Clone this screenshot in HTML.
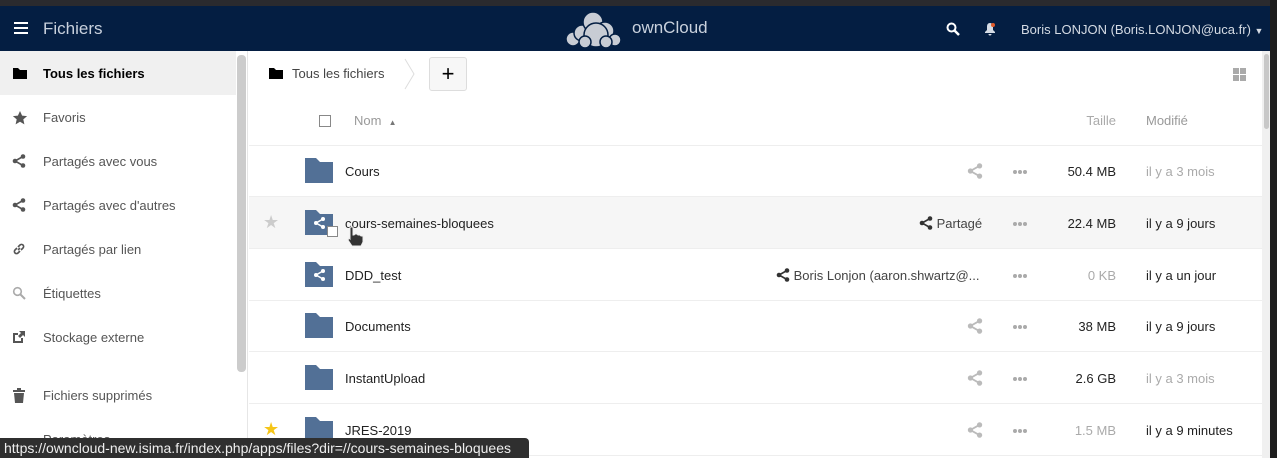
<!DOCTYPE html><html><head><meta charset="utf-8"><style>
*{margin:0;padding:0;box-sizing:border-box}
body{width:1277px;height:458px;overflow:hidden;background:#fff;font-family:"Liberation Sans",sans-serif;font-size:13px;color:#222;position:relative}
.a{position:absolute}
.top{left:0;top:0;width:1277px;height:6px;background:#2a2a2e}
.nav{left:0;top:6px;width:1277px;height:45px;background:#041e42;color:#fff}
.side{left:0;top:51px;width:248px;height:407px;border-right:1px solid #e6e6e6;background:#fff}
.si{position:absolute;left:0;width:236px;height:44px;line-height:46px;padding-left:43px;color:#555}
.si svg{position:absolute;left:12px;top:15px}
.row{position:absolute;left:249px;width:1013px;height:52px;border-bottom:1px solid #eee}
.fold{position:absolute;left:56px;top:13px}
.nm{position:absolute;left:96px;top:1px;line-height:51px;color:#222}
.sz{position:absolute;right:146px;top:1px;line-height:51px;color:#222}
.md{position:absolute;left:897px;top:1px;line-height:51px;color:#222}
.dots{position:absolute;left:764px;top:25px;width:4px;height:4px;border-radius:2px;background:#aaa;box-shadow:5px 0 #aaa,10px 0 #aaa}
.sh{position:absolute;left:718px;top:18px}
.g{color:#aaa !important}
</style></head><body>
<div class="a top"></div>
<div class="a nav">
<div class="a" style="left:14px;top:16px;width:14px;height:2px;background:#fff;box-shadow:0 5px #fff,0 10px #fff"></div>
<div class="a" style="left:43px;top:13px;font-size:17px;color:#c9d1dd">Fichiers</div>
<svg class="a" style="left:565px;top:5px" width="62" height="38" viewBox="0 0 62 38"><g fill="#c8ccd4" stroke="#041e42" stroke-width="1.5"><circle cx="8" cy="28" r="7"/><circle cx="17" cy="22" r="8"/><circle cx="28" cy="11" r="10"/><circle cx="40" cy="20" r="9"/><circle cx="50" cy="29" r="6"/><circle cx="31" cy="24" r="12"/><circle cx="20" cy="31" r="6"/><circle cx="41" cy="31" r="6"/></g></svg>
<div class="a" style="left:632px;top:12px;font-size:17px;color:#c9d1dd">ownCloud</div>
<svg class="a" style="left:946px;top:16px" width="14" height="14" viewBox="0 0 14 14"><circle cx="5.5" cy="5.5" r="4" fill="none" stroke="#fff" stroke-width="2"/><path d="M8.5 8.5L13 13" stroke="#fff" stroke-width="2.5"/></svg>
<svg class="a" style="left:984px;top:16px" width="12" height="14" viewBox="0 0 12 14"><path d="M6 1C3.5 1 3 3 3 5v3L1 10v1h10v-1L9 8V5C9 3 8.5 1 6 1zM4.5 12h3a1.5 1.5 0 0 1-3 0z" fill="#d5dbe4"/><circle cx="9" cy="3" r="2" fill="#e05a2a"/></svg>
<div class="a" style="left:1021px;top:16px;font-size:13px;color:#d5dbe4">Boris LONJON (Boris.LONJON@uca.fr) <span style="font-size:9px">▼</span></div>
</div>
<div class="a side">
<div class="si" style="top:0;background:#f0f0f0;color:#000;font-weight:bold"><svg width="16" height="14" viewBox="0 0 16 14"><path d="M1 2h5l2 2h7v9H1z" fill="#000"/></svg>Tous les fichiers</div>
<div class="si" style="top:44px"><svg width="16" height="16" viewBox="0 0 16 16"><path d="M8 1l2.1 4.6 5 .5-3.8 3.3 1.1 5L8 11.8 3.6 14.4l1.1-5L.9 6.1l5-.5z" fill="#555"/></svg>Favoris</div>
<div class="si" style="top:88px"><svg width="14" height="14" viewBox="0 0 14 14"><circle cx="11" cy="2.5" r="2.3" fill="#555"/><circle cx="3" cy="7" r="2.3" fill="#555"/><circle cx="11" cy="11.5" r="2.3" fill="#555"/><path d="M11 2.5L3 7l8 4.5" stroke="#555" stroke-width="1.6" fill="none"/></svg>Partagés avec vous</div>
<div class="si" style="top:132px"><svg width="14" height="14" viewBox="0 0 14 14"><circle cx="11" cy="2.5" r="2.3" fill="#555"/><circle cx="3" cy="7" r="2.3" fill="#555"/><circle cx="11" cy="11.5" r="2.3" fill="#555"/><path d="M11 2.5L3 7l8 4.5" stroke="#555" stroke-width="1.6" fill="none"/></svg>Partagés avec d'autres</div>
<div class="si" style="top:176px"><svg width="14" height="14" viewBox="0 0 14 14"><path d="M6 8l2-2M5 6L3 8a2 2 0 0 0 3 3l2-2M9 8l2-2a2 2 0 0 0-3-3L6 5" stroke="#555" stroke-width="1.6" fill="none"/></svg>Partagés par lien</div>
<div class="si" style="top:220px"><svg width="14" height="14" viewBox="0 0 14 14"><circle cx="5.5" cy="5.5" r="3.8" fill="none" stroke="#aaa" stroke-width="1.6"/><path d="M8.5 8.5L13 13" stroke="#aaa" stroke-width="2"/></svg>Étiquettes</div>
<div class="si" style="top:264px"><svg width="14" height="14" viewBox="0 0 14 14"><path d="M1 3h5v2H3v6h6V8h2v5H1z M7 1h6v6l-2-2-3 3-2-2 3-3z" fill="#555"/></svg>Stockage externe</div>
<div class="si" style="top:322px"><svg width="14" height="16" viewBox="0 0 14 16"><path d="M1 2h12v2H1zM5 0h4v2H5zM2 5h10l-1 10H3z" fill="#555"/></svg>Fichiers supprimés</div>
<div class="si" style="top:366px">Paramètres</div>
<div class="a" style="left:237px;top:4px;width:9px;height:317px;background:#ccc;border-radius:4px"></div>
</div>
<svg class="a" style="left:268px;top:66px" width="16" height="14" viewBox="0 0 16 14"><path d="M1 2h5l2 2h7v9H1z" fill="#000"/></svg>
<div class="a" style="left:292px;top:66px;color:#444">Tous les fichiers</div>
<svg class="a" style="left:404px;top:58px" width="12" height="32"><path d="M1 1l9 15-9 15" stroke="#ddd" fill="none"/></svg>
<div class="a" style="left:429px;top:57px;width:38px;height:34px;border:1px solid #ddd;border-radius:3px;background:#f7f7f7;text-align:center;line-height:32px;font-size:22px;color:#000">+</div>
<div class="a" style="left:1233px;top:68px;width:6px;height:6px;background:#aaa;box-shadow:7px 0 #aaa,0 7px #aaa,7px 7px #aaa"></div>
<div class="row" style="top:95px;height:51px">
<div class="a" style="left:70px;top:20px;width:12px;height:12px;border:1px solid #888;background:#fff"></div>
<div class="a" style="left:105px;top:18px;color:#999">Nom &nbsp;<span style="font-size:8px;color:#777">▲</span></div>
<div class="a" style="right:146px;top:18px;color:#aaa">Taille</div>
<div class="a" style="left:897px;top:18px;color:#999">Modifié</div>
</div>
<div class="row" style="top:145px"><svg class="fold" width="28" height="25" viewBox="0 0 28 25"><path d="M0 0h11l4 4h13v21H0z" fill="#527096"/></svg><div class="nm">Cours</div>
<svg class="sh" width="16" height="16" viewBox="0 0 14 14"><circle cx="11" cy="2.5" r="2.3" fill="#bbb"/><circle cx="3" cy="7" r="2.3" fill="#bbb"/><circle cx="11" cy="11.5" r="2.3" fill="#bbb"/><path d="M11 2.5L3 7l8 4.5" stroke="#bbb" stroke-width="1.6" fill="none"/></svg><div class="dots"></div><div class="sz">50.4 MB</div><div class="md g">il y a 3 mois</div></div>
<div class="row" style="top:197px;background:#f6f6f6"><div class="a" style="left:14px;top:15px;color:#ccc;font-size:18px">★</div><svg class="fold" width="28" height="25" viewBox="0 0 28 25"><path d="M0 0h11l4 4h13v21H0z" fill="#527096"/><g transform="translate(8,7)"><circle cx="10" cy="2" r="2" fill="#fff"/><circle cx="3" cy="6" r="2" fill="#fff"/><circle cx="10" cy="10" r="2" fill="#fff"/><path d="M10 2L3 6l7 4" stroke="#fff" stroke-width="1.5" fill="none"/></g></svg>
<div class="a" style="left:78px;top:29px;width:11px;height:11px;border:1px solid #888;background:#fff"></div><div class="nm">cours-semaines-bloquees</div>
<div class="a" style="left:670px;top:1px;line-height:51px;color:#444"><svg width="14" height="14" viewBox="0 0 14 14" style="vertical-align:-2px"><circle cx="11" cy="2.5" r="2.3" fill="#333"/><circle cx="3" cy="7" r="2.3" fill="#333"/><circle cx="11" cy="11.5" r="2.3" fill="#333"/><path d="M11 2.5L3 7l8 4.5" stroke="#333" stroke-width="1.6" fill="none"/></svg> Partagé</div><div class="dots"></div><div class="sz">22.4 MB</div><div class="md">il y a 9 jours</div></div>
<div class="row" style="top:249px"><svg class="fold" width="28" height="25" viewBox="0 0 28 25"><path d="M0 0h11l4 4h13v21H0z" fill="#527096"/><g transform="translate(8,7)"><circle cx="10" cy="2" r="2" fill="#fff"/><circle cx="3" cy="6" r="2" fill="#fff"/><circle cx="10" cy="10" r="2" fill="#fff"/><path d="M10 2L3 6l7 4" stroke="#fff" stroke-width="1.5" fill="none"/></g></svg><div class="nm">DDD_test</div>
<div class="a" style="left:527px;top:1px;line-height:51px;color:#444"><svg width="14" height="14" viewBox="0 0 14 14" style="vertical-align:-2px"><circle cx="11" cy="2.5" r="2.3" fill="#333"/><circle cx="3" cy="7" r="2.3" fill="#333"/><circle cx="11" cy="11.5" r="2.3" fill="#333"/><path d="M11 2.5L3 7l8 4.5" stroke="#333" stroke-width="1.6" fill="none"/></svg> Boris Lonjon (aaron.shwartz@...</div><div class="dots"></div><div class="sz g">0 KB</div><div class="md">il y a un jour</div></div>
<div class="row" style="top:300px"><svg class="fold" width="28" height="25" viewBox="0 0 28 25"><path d="M0 0h11l4 4h13v21H0z" fill="#527096"/></svg><div class="nm">Documents</div>
<svg class="sh" width="16" height="16" viewBox="0 0 14 14"><circle cx="11" cy="2.5" r="2.3" fill="#bbb"/><circle cx="3" cy="7" r="2.3" fill="#bbb"/><circle cx="11" cy="11.5" r="2.3" fill="#bbb"/><path d="M11 2.5L3 7l8 4.5" stroke="#bbb" stroke-width="1.6" fill="none"/></svg><div class="dots"></div><div class="sz">38 MB</div><div class="md">il y a 9 jours</div></div>
<div class="row" style="top:352px"><svg class="fold" width="28" height="25" viewBox="0 0 28 25"><path d="M0 0h11l4 4h13v21H0z" fill="#527096"/></svg><div class="nm">InstantUpload</div>
<svg class="sh" width="16" height="16" viewBox="0 0 14 14"><circle cx="11" cy="2.5" r="2.3" fill="#bbb"/><circle cx="3" cy="7" r="2.3" fill="#bbb"/><circle cx="11" cy="11.5" r="2.3" fill="#bbb"/><path d="M11 2.5L3 7l8 4.5" stroke="#bbb" stroke-width="1.6" fill="none"/></svg><div class="dots"></div><div class="sz">2.6 GB</div><div class="md g">il y a 3 mois</div></div>
<div class="row" style="top:404px"><div class="a" style="left:14px;top:15px;color:#f5c518;font-size:18px">★</div><svg class="fold" width="28" height="25" viewBox="0 0 28 25"><path d="M0 0h11l4 4h13v21H0z" fill="#527096"/></svg><div class="nm">JRES-2019</div>
<svg class="sh" width="16" height="16" viewBox="0 0 14 14"><circle cx="11" cy="2.5" r="2.3" fill="#bbb"/><circle cx="3" cy="7" r="2.3" fill="#bbb"/><circle cx="11" cy="11.5" r="2.3" fill="#bbb"/><path d="M11 2.5L3 7l8 4.5" stroke="#bbb" stroke-width="1.6" fill="none"/></svg><div class="dots"></div><div class="sz g">1.5 MB</div><div class="md">il y a 9 minutes</div></div>
<div class="a" style="left:1262px;top:51px;width:8px;height:407px;background:#f0f0f0"></div>
<div class="a" style="left:1264px;top:54px;width:5px;height:75px;background:#c8c8c8;border-radius:3px"></div>
<div class="a" style="left:1270px;top:0;width:7px;height:458px;background:#1e1e1e"></div>
<svg class="a" style="left:345px;top:226px" width="20" height="22" viewBox="0 0 20 22"><path d="M5 1h3v8h1l1-1h2l1 1h2l1 1h2v6l-2 4H7L3 14l1-2 1 1z" fill="#333" stroke="#eee"/></svg>
<div class="a" style="left:0;top:438px;width:529px;height:20px;background:#2f2f2f;color:#eee;font-size:14px;line-height:20px;padding-left:4px;border-top-right-radius:4px;white-space:nowrap;overflow:hidden">https://owncloud-new.isima.fr/index.php/apps/files?dir=//cours-semaines-bloquees</div>
</body></html>
